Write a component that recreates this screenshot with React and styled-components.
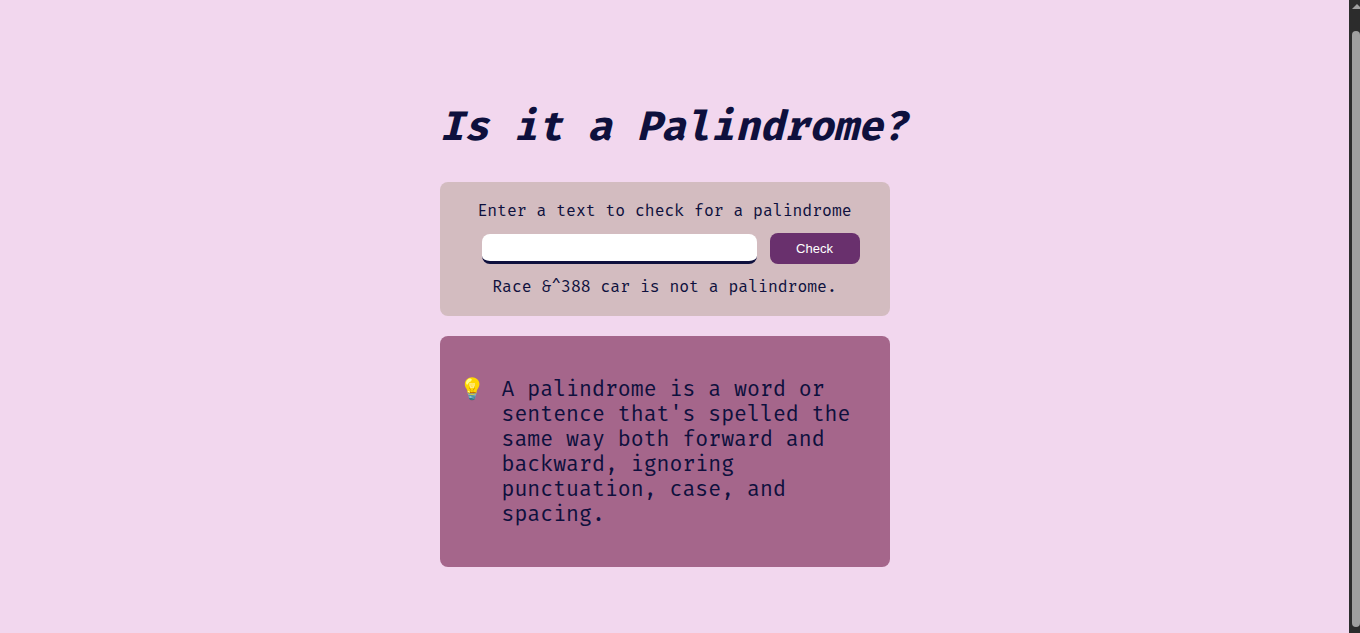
import React, { useState } from "react";
import styled, { createGlobalStyle } from "styled-components";

const colors = {
  ink: "#0e103d",
  page: "#f2d7ee",
  card: "#d3bcc0",
  accent: "#69306d",
  info: "#a5668b",
};

const GlobalStyle = createGlobalStyle`
  *, *::before, *::after { box-sizing: border-box; }
  body {
    margin: 0;
    background: ${colors.page};
    color: ${colors.ink};
    font-family: "Fira Code", "DejaVu Sans Mono", monospace;
    font-size: 16px;
  }
`;

const Page = styled.div`
  display: flex;
  min-height: 100vh;
`;

const Main = styled.main`
  flex: 1;
  display: flex;
  flex-direction: column;
  align-items: center;
  padding: 102px 20px 60px 0;
`;

const Column = styled.div`
  width: 100%;
  max-width: 450px;
  display: flex;
  flex-direction: column;
  gap: 20px;
`;

const Title = styled.h1`
  margin: 0 0 8px;
  font-size: 40px;
  line-height: 52px;
  font-style: italic;
  font-weight: 700;
  white-space: nowrap;
`;

const Card = styled.form`
  display: flex;
  flex-direction: column;
  gap: 11px;
  padding: 19px 30px 16px;
  border-radius: 8px;
  background: ${colors.card};
  text-align: center;
`;

const Label = styled.label`
  line-height: 21px;
`;

const Controls = styled.div`
  display: flex;
  justify-content: flex-end;
  align-items: flex-end;
  gap: 13px;
`;

const TextInput = styled.input`
  width: 275px;
  min-width: 0;
  height: 30px;
  padding: 4px 8px;
  border: 0;
  border-bottom: 3px solid ${colors.ink};
  border-radius: 8px;
  background: #fff;
  color: ${colors.ink};
  font: inherit;
`;

const CheckButton = styled.button`
  width: 90px;
  height: 31px;
  padding: 0;
  border: 0;
  border-radius: 8px;
  background: ${colors.accent};
  color: #fff;
  font-family: "Liberation Sans", Arial, sans-serif;
  font-size: 13px;
  cursor: pointer;
`;

const Result = styled.output`
  line-height: 25px;
`;

const Info = styled.section`
  display: flex;
  gap: 18px;
  padding: 41px 30px 40px 20px;
  border-radius: 8px;
  background: ${colors.info};
  font-size: 21px;
  line-height: 25px;
`;

const Bulb = styled.span`
  flex: none;
  width: 24px;
  text-align: center;
  font-family: "Noto Color Emoji", sans-serif;
`;

const InfoText = styled.p`
  margin: 0;
`;

const ScrollRail = styled.div`
  position: sticky;
  top: 0;
  flex: none;
  width: 11px;
  height: 100vh;
  display: flex;
  flex-direction: column;
  align-items: flex-end;
  gap: 21px;
  padding: 4px 0 6px;
  background: #2c2c2c;
  overflow: hidden;
`;

const ScrollArrow = styled.svg`
  flex: none;
  width: 8px;
  height: 6px;
`;

const ScrollThumb = styled.div`
  flex: 1;
  width: 8px;
  border-radius: 4px;
  background: #9f9f9f;
`;

export default function App() {
  const [text, setText] = useState("");
  const [result, setResult] = useState("Race &^388 car is not a palindrome.");

  const check = (event) => {
    event.preventDefault();
    const clean = text.toLowerCase().replace(/[^a-z0-9]/g, "");
    if (!clean) return;
    const matches = clean === [...clean].reverse().join("");
    setResult(`${text} is ${matches ? "" : "not "}a palindrome.`);
    setText("");
  };

  return (
    <>
      <GlobalStyle />
      <Page>
        <Main>
          <Column>
            <Title>Is it a Palindrome?</Title>
            <Card onSubmit={check}>
              <Label htmlFor="text-input">Enter a text to check for a palindrome</Label>
              <Controls>
                <TextInput
                  id="text-input"
                  type="text"
                  value={text}
                  onChange={(event) => setText(event.target.value)}
                />
                <CheckButton type="submit">Check</CheckButton>
              </Controls>
              <Result htmlFor="text-input">{result}</Result>
            </Card>
            <Info>
              <Bulb role="img" aria-label="light bulb">💡</Bulb>
              <InfoText>
                A palindrome is a word or sentence that's spelled the same way both
                forward and backward, ignoring punctuation, case, and spacing.
              </InfoText>
            </Info>
          </Column>
        </Main>
        <ScrollRail aria-hidden="true">
          <ScrollArrow viewBox="0 0 8 6">
            <path d="M0 5 L5 0 L10 5 Z" fill="#9f9f9f" />
          </ScrollArrow>
          <ScrollThumb />
        </ScrollRail>
      </Page>
    </>
  );
}
